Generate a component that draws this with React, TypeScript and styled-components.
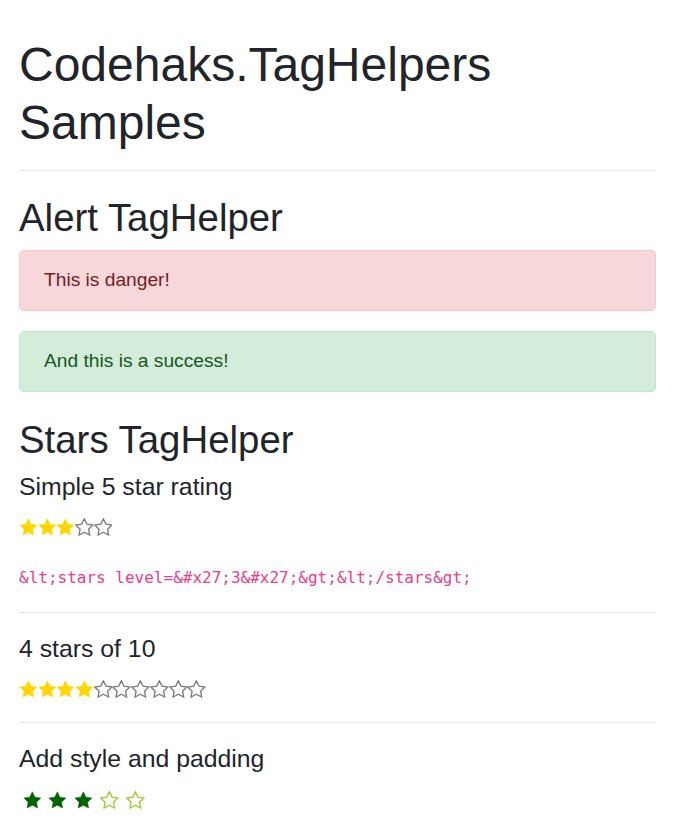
import React from "react";
import styled, { createGlobalStyle } from "styled-components";

const GlobalStyle = createGlobalStyle`
  html, body {
    margin: 0;
    padding: 0;
    background: #ffffff;
  }
  body {
    font-family: "Liberation Sans", Arial, sans-serif;
    font-size: 19.2px;
    line-height: 1.5;
    color: #212529;
  }
  * { box-sizing: border-box; }
`;

const Page = styled.main`
  padding: 36px 19px 0;
`;

const Title = styled.h1`
  margin: 0;
  font-size: 48px;
  line-height: 57.6px;
  font-weight: 400;
`;

const SectionTitle = styled.h2`
  margin: 0 0 9px;
  font-size: 38.4px;
  line-height: 46.08px;
  font-weight: 400;
`;

const SubTitle = styled.h5`
  margin: 0 0 9.6px;
  font-size: 24.8px;
  line-height: 28.8px;
  font-weight: 400;
`;

const Divider = styled.hr<{ $top: number; $bottom: number }>`
  border: 0;
  border-top: 1px solid rgba(0, 0, 0, 0.1);
  height: 0;
  margin: ${(p) => p.$top}px 0 ${(p) => p.$bottom}px;
`;

const AlertList = styled.div`
  display: flex;
  flex-direction: column;
  gap: 20.5px;
  margin-bottom: 25.3px;
`;

const alertColors = {
  danger: { bg: "#f8d7da", border: "#f5c6cb", text: "#721c24" },
  success: { bg: "#d4edda", border: "#c3e6cb", text: "#155724" },
};

const Alert = styled.div<{ $variant: keyof typeof alertColors }>`
  padding: 15px 24px;
  border: 1px solid ${(p) => alertColors[p.$variant].border};
  border-radius: 4.8px;
  background: ${(p) => alertColors[p.$variant].bg};
  color: ${(p) => alertColors[p.$variant].text};
  line-height: 28.8px;
`;

const StarRow = styled.div`
  display: flex;
  align-items: center;
  height: 32px;
`;

const StarItem = styled.span<{ $pad: number }>`
  display: inline-flex;
  padding: 0 ${(p) => p.$pad}px;
  svg {
    display: block;
  }
`;

const CodeLine = styled.p`
  margin: 20px 0 0;
  font-family: "DejaVu Sans Mono", "Liberation Mono", monospace;
  font-size: 16px;
  line-height: 30px;
  color: #e83e8c;
  word-break: break-word;
`;

type StarProps = { filled: boolean; fill: string; empty: string };

const Star: React.FC<StarProps> = ({ filled, fill, empty }) => (
  <svg width={18.7} height={17.85} viewBox="1 1 22 21" aria-hidden="true">
    <polygon
      points="12,2 15.09,8.26 22,9.27 17,14.14 18.18,21.02 12,17.77 5.82,21.02 7,14.14 2,9.27 8.91,8.26"
      fill={filled ? fill : "#ffffff"}
      stroke={filled ? fill : empty}
      strokeWidth={filled ? 0.6 : 1.6}
      strokeLinejoin="miter"
    />
  </svg>
);

type StarsProps = {
  level: number;
  max?: number;
  fill?: string;
  empty?: string;
  pad?: number;
};

const Stars: React.FC<StarsProps> = ({
  level,
  max = 5,
  fill = "#ffd700",
  empty = "#7d7d7d",
  pad = 0,
}) => (
  <StarRow>
    {Array.from({ length: max }, (_, i) => (
      <StarItem key={i} $pad={pad}>
        <Star filled={i < level} fill={fill} empty={empty} />
      </StarItem>
    ))}
  </StarRow>
);

export default function App() {
  return (
    <>
      <GlobalStyle />
      <Page>
        <Title>Codehaks.TagHelpers Samples</Title>
        <Divider $top={18.8} $bottom={24} />
        <SectionTitle>Alert TagHelper</SectionTitle>
        <AlertList>
          <Alert $variant="danger">This is danger!</Alert>
          <Alert $variant="success">And this is a success!</Alert>
        </AlertList>
        <SectionTitle>Stars TagHelper</SectionTitle>
        <SubTitle>Simple 5 star rating</SubTitle>
        <Stars level={3} />
        <CodeLine>{"&lt;stars level=&#x27;3&#x27;&gt;&lt;/stars&gt;"}</CodeLine>
        <Divider $top={19} $bottom={22} />
        <SubTitle>4 stars of 10</SubTitle>
        <Stars level={4} max={10} />
        <Divider $top={17} $bottom={22} />
        <SubTitle>Add style and padding</SubTitle>
        <Stars level={3} fill="#006400" empty="#9acd32" pad={3.6} />
      </Page>
    </>
  );
}
